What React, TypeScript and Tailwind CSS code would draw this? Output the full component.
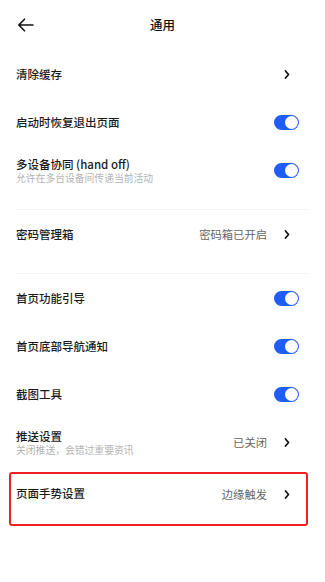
import React from "react";

const font = { fontFamily: '"Noto Sans CJK SC", "Noto Sans", sans-serif' };

function Chevron() {
  return (
    <svg width="6" height="9" viewBox="0 0 6 9" className="shrink-0">
      <path d="M1.5 1 L4.5 4.5 L1.5 8" fill="none" stroke="#111" strokeWidth="1.7" strokeLinecap="round" strokeLinejoin="round" />
    </svg>
  );
}

function Toggle() {
  return (
    <div className="relative w-[25px] h-[15px] rounded-full bg-[#1f5ef5] shrink-0">
      <div className="absolute right-[1px] top-[1px] w-[13px] h-[13px] rounded-full bg-white"></div>
    </div>
  );
}

function Row({ label, sub, right, kind }: { label: string; sub?: string; right?: string; kind: "chev" | "toggle" }) {
  return (
    <div className="flex items-center h-[48px] pl-[16px] pr-[26px]">
      <div className="flex-1 flex flex-col justify-center">
        <div className="text-[11.5px] leading-[16px] text-[#1a1a1a] font-medium">{label}</div>
        {sub && <div className="text-[9.8px] leading-[13px] text-[#b3b3b3]">{sub}</div>}
      </div>
      {right && <div className="text-[11.3px] text-[#666] mr-[17px]">{right}</div>}
      {kind === "chev" ? <div className="w-[6px] flex justify-center mr-[9px]"><Chevron /></div> : <Toggle />}
    </div>
  );
}

export default function App() {
  return (
    <div className="w-[325px] h-[582px] bg-white" style={font}>
      <div className="relative h-[50px] flex items-center justify-center">
        <div className="absolute left-[17px] top-[18px]">
          <svg width="17" height="14" viewBox="0 0 17 14">
            <path d="M16 7 H2 M7.5 1.2 L1.8 7 L7.5 12.8" fill="none" stroke="#111" strokeWidth="1.6" strokeLinecap="round" strokeLinejoin="round" />
          </svg>
        </div>
        <div className="text-[12.5px] text-[#111] font-medium">通用</div>
      </div>
      <Row label="清除缓存" kind="chev" />
      <Row label="启动时恢复退出页面" kind="toggle" />
      <Row label="多设备协同 (hand off)" sub="允许在多台设备间传递当前活动" kind="toggle" />
      <div className="pt-[15px] px-[16px]"><div className="h-px bg-[#f5f5f5]" /></div>
      <Row label="密码管理箱" right="密码箱已开启" kind="chev" />
      <div className="pt-[15px] px-[16px]"><div className="h-px bg-[#f5f5f5]" /></div>
      <Row label="首页功能引导" kind="toggle" />
      <Row label="首页底部导航通知" kind="toggle" />
      <Row label="截图工具" kind="toggle" />
      <Row label="推送设置" sub="关闭推送，会错过重要资讯" right="已关闭" kind="chev" />
      <div className="ml-[9px] mt-[6px] w-[299px] h-[54px] border-2 border-[#ee2222] rounded-[3px]">
        <div className="flex items-center h-[36px] pl-[5px] pr-[7px] pt-[4px]">
          <div className="flex-1 text-[11.5px] text-[#1a1a1a] font-medium">页面手势设置</div>
          <div className="text-[11.3px] text-[#666] mr-[17px]">边缘触发</div>
          <div className="w-[6px] flex justify-center mr-[9px]"><Chevron /></div>
        </div>
      </div>
    </div>
  );
}
